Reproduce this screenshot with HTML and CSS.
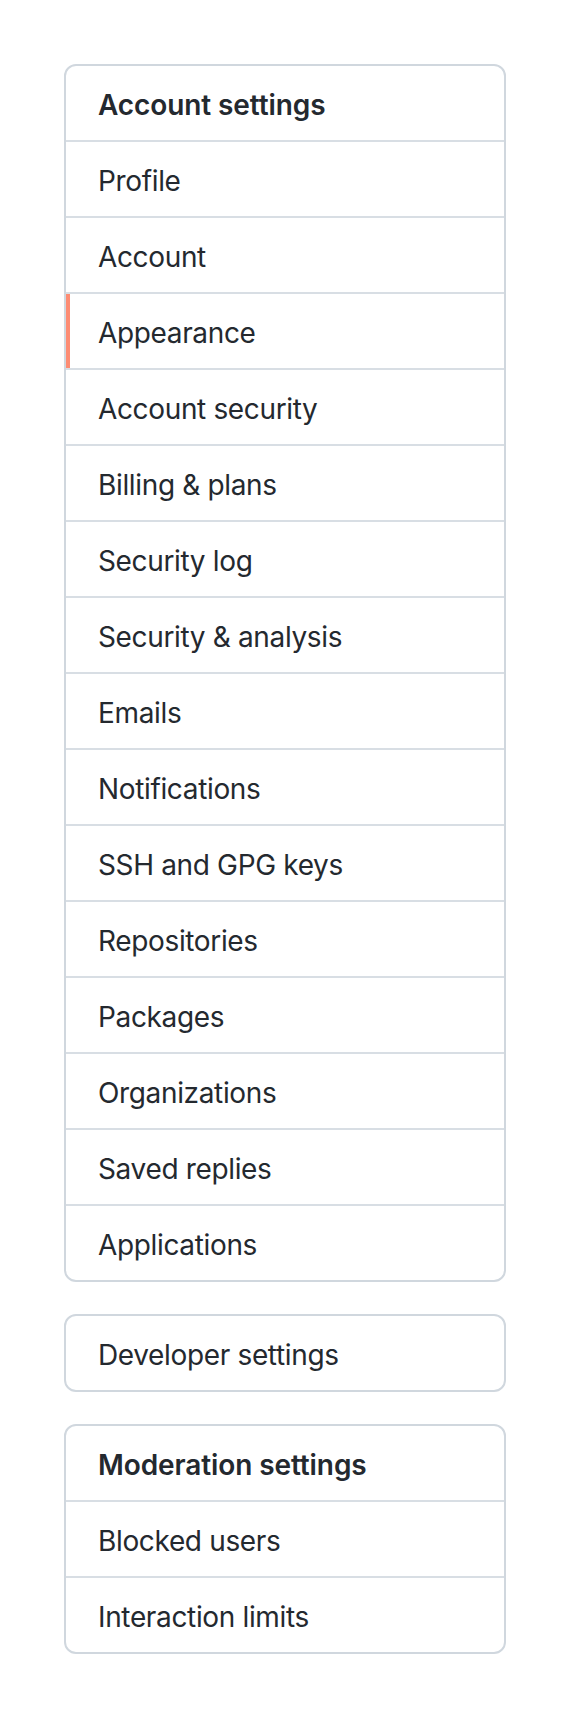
FILE: index.html
```html
<!DOCTYPE html>
<html lang="en">
<head>
<meta charset="utf-8">
<title>Settings</title>
<link rel="stylesheet" href="styles.css">
</head>
<body>
<div class="sidebar">
  <nav class="menu">
    <h3 class="menu-heading">Account settings</h3>
    <a class="menu-item" href="#">Profile</a>
    <a class="menu-item" href="#">Account</a>
    <a class="menu-item selected" href="#">Appearance</a>
    <a class="menu-item" href="#">Account security</a>
    <a class="menu-item" href="#">Billing &amp; plans</a>
    <a class="menu-item" href="#">Security log</a>
    <a class="menu-item" href="#">Security &amp; analysis</a>
    <a class="menu-item" href="#">Emails</a>
    <a class="menu-item" href="#">Notifications</a>
    <a class="menu-item" href="#">SSH and GPG keys</a>
    <a class="menu-item" href="#">Repositories</a>
    <a class="menu-item" href="#">Packages</a>
    <a class="menu-item" href="#">Organizations</a>
    <a class="menu-item" href="#">Saved replies</a>
    <a class="menu-item" href="#">Applications</a>
  </nav>
  <nav class="menu">
    <a class="menu-item" href="#">Developer settings</a>
  </nav>
  <nav class="menu">
    <h3 class="menu-heading">Moderation settings</h3>
    <a class="menu-item" href="#">Blocked users</a>
    <a class="menu-item" href="#">Interaction limits</a>
  </nav>
</div>
</body>
</html>
```
FILE: styles.css
```css
* { box-sizing: border-box; }
html, body { margin: 0; padding: 0; background: #ffffff; }
body {
  font-family: Inter, "Noto Sans", "Liberation Sans", sans-serif;
  color: #24292f;
}
.sidebar {
  padding: 64px 64px;
  display: flex;
  flex-direction: column;
  gap: 32px;
}
.menu {
  display: flex;
  flex-direction: column;
  border: 2px solid #d0d7de;
  border-radius: 12px;
  overflow: hidden;
  background: #ffffff;
}
.menu-heading,
.menu-item {
  display: block;
  margin: 0;
  padding: 18px 32px 14px;
  font-size: 28px;
  line-height: 42px;
  height: 74px;
  color: #24292f;
  text-decoration: none;
}
.menu-heading { font-weight: 600; letter-spacing: -0.1px; }
.menu-item { font-weight: 400; letter-spacing: -0.35px; }
.menu > * + * { border-top: 2px solid #d8dee4; height: 76px; }
.menu-item.selected { box-shadow: inset 4px 0 0 #fd8c73; }
```
